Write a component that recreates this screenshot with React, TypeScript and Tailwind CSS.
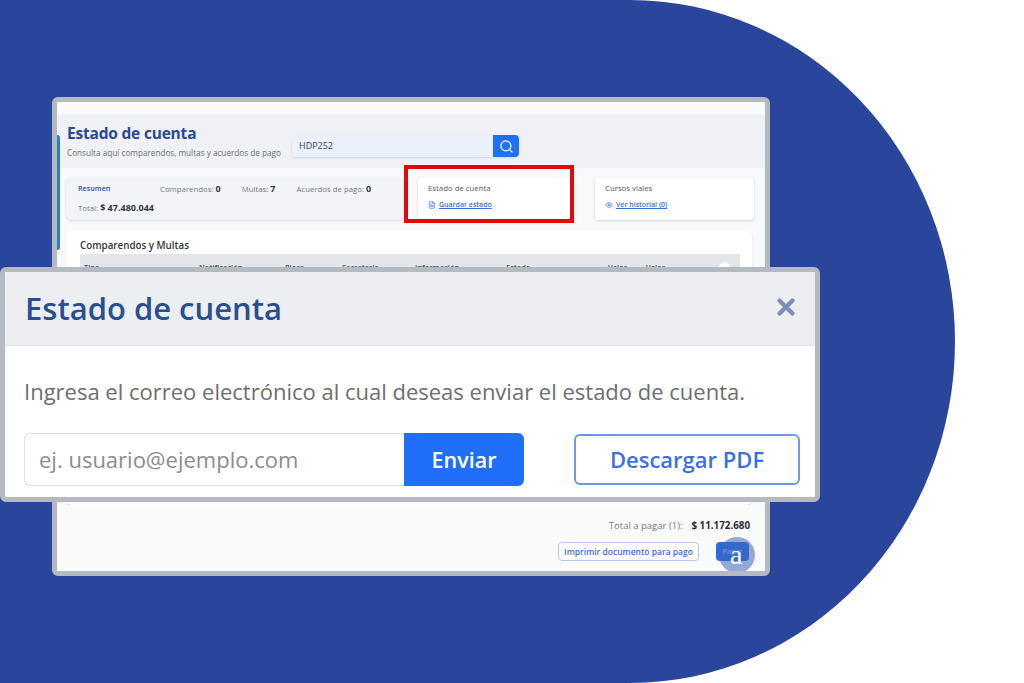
import { FileText, Eye, Search, X } from "lucide-react";

const font = { fontFamily: '"Open Sans", "Noto Sans", sans-serif' };

function Stat({ label, value }: { label: string; value: string }) {
  return (
    <span className="text-[#74787d] whitespace-nowrap">
      {label}: <b className="text-[#33373b] text-[9px]">{value}</b>
    </span>
  );
}

function LinkCard({ title, link, icon, cardClass }: { title: string; link: string; icon: React.ReactNode; cardClass: string }) {
  return (
    <div className={`h-[42px] bg-white rounded pl-[10px] pt-[5px] ${cardClass}`}>
      <div className="text-[7.8px] leading-[11px] text-[#55595e]">{title}</div>
      <div className="flex items-center gap-[3px] mt-[5px] text-[7px] leading-[11px] font-semibold text-[#3b6fd8] underline">
        {icon}
        {link}
      </div>
    </div>
  );
}

function Card() {
  return (
    <div className="relative w-[718px] h-[479px] ml-[52px] border-[5px] border-[#b5b9c0] rounded-md bg-[#f8f9fa] flex flex-col overflow-hidden">
      <div className="h-3 bg-[#fafafa] shrink-0" />
      <div className="h-[54px] bg-[#f0f1f4] pl-[10px] flex shrink-0">
        <div className="w-[225px] pt-[9px]">
          <div className="text-[15.5px] leading-[20px] font-bold tracking-[-0.2px] text-[#2b4a8e]">Estado de cuenta</div>
          <div className="text-[8.2px] leading-[12px] mt-[4px] text-[#6b6f75] whitespace-nowrap">
            Consulta aquí comparendos, multas y acuerdos de pago
          </div>
        </div>
        <div className="flex h-[22px] mt-[21px] shadow-sm rounded-sm">
          <div className="w-[201px] bg-[#eaf1fc] pl-[7px] text-[9px] leading-[22px] text-[#3c4350]">HDP252</div>
          <div className="w-[26px] bg-[#1f70f5] flex items-center justify-center rounded-r-sm">
            <Search className="w-[15px] h-[15px] text-white" strokeWidth={2} />
          </div>
        </div>
      </div>

      <div className="flex pl-[9px] pt-[10px] shrink-0">
        <div className="w-[338px] h-[42px] bg-[#f3f4f7] rounded-md shadow-[0_1px_3px_rgba(0,0,0,0.12)] pl-3 pt-[5px] text-[7.8px] leading-[11px]">
          <div className="flex">
            <span className="w-[82px] font-semibold text-[7.2px] text-[#2f5597]">Resumen</span>
            <div className="flex gap-[21px]">
              <Stat label="Comparendos" value="0" />
              <Stat label="Multas" value="7" />
              <Stat label="Acuerdos de pago" value="0" />
            </div>
          </div>
          <div className="mt-[7px] text-[#74787d]">
            Total: <b className="text-[#33373b] text-[9px]">$ 47.480.044</b>
          </div>
        </div>
        <LinkCard
          title="Estado de cuenta"
          link="Guardar estado"
          icon={<FileText className="w-[8px] h-[8px]" />}
          cardClass="ml-[14px] w-[157px] shadow-[0_1px_3px_rgba(0,0,0,0.12)]"
        />
        <LinkCard
          title="Cursos viales"
          link="Ver historial (0)"
          icon={<Eye className="w-[8px] h-[8px]" />}
          cardClass="ml-[20px] w-[159px] shadow-[0_1px_3px_rgba(0,0,0,0.15)]"
        />
      </div>

      <div className="ml-[9px] mr-[13px] mt-[10px] flex-1 bg-white rounded-md pl-[14px] pr-[12px] pt-[9px] flex flex-col shadow-[0_1px_2px_rgba(0,0,0,0.12)]">
        <div className="text-[9.8px] leading-[13px] font-semibold text-[#33373b]">Comparendos y Multas</div>
        <div className="h-[20px] mt-[2px] bg-[#e3e5e8] relative text-[7.5px] font-semibold text-[#555] flex pl-1 pt-[8px] leading-[11px] overflow-hidden">
          <span className="w-[115px]">Tipo</span>
          <span className="w-[86px]">Notificación</span>
          <span className="w-[57px]">Placa</span>
          <span className="w-[73px]">Secretaría</span>
          <span className="w-[91px]">Información</span>
          <span className="w-[102px]">Estado</span>
          <span className="w-[38px]">Valor</span>
          <span className="w-[73px]">Valor</span>
          <span className="w-[11px] h-[11px] rounded-full bg-white" />
        </div>
      </div>

      <div className="bg-[#fafafa] h-[66px] shrink-0 pr-[15px] flex flex-col items-end pt-[15px]">
        <div className="flex text-[9.5px] leading-[12px] text-[#777b80]">
          <span>Total a pagar (1):</span>
          <b className="ml-[9px] text-[9.8px] text-[#2b2f33]">$ 11.172.680</b>
        </div>
        <div className="flex mt-[10px] mr-[1px]">
          <div className="w-[141px] h-[19px] border border-[#b5c9ee] rounded-sm bg-white text-center text-[8.5px] leading-[17px] font-semibold text-[#3b6fd8]">
            Imprimir documento para pago
          </div>
          <div className="relative w-[33px] h-[19px] ml-[17px] bg-[#2d6be0] rounded-sm text-center text-[7.5px] leading-[19px] text-[#c9d8f5]">
            Pagar
            <span className="absolute left-[3px] top-[-5px] w-9 h-9 rounded-full bg-[#3e66b8]/55" />
            <span className="absolute left-[14px] top-[-1px] text-[28px] leading-[28px] text-white" style={{ fontFamily: '"Liberation Serif", serif' }}>
              a
            </span>
          </div>
        </div>
      </div>

      <div className="absolute left-0 top-[33px] w-[3px] h-[115px] bg-[#2a7fc0] rounded-r-sm" />
      <div className="absolute left-[347px] top-[63px] w-[170px] h-[58px] border-[4px] border-[#e00a0a]" />
    </div>
  );
}

function Modal() {
  return (
    <div className="absolute left-0 top-[267px] w-[820px] h-[235px] border-[5px] border-[#b5b9c0] rounded-md bg-white overflow-hidden">
      <div className="h-[74px] bg-[#eceef1] border-b border-[#e2e4e7] flex items-center justify-between pl-5 pr-4">
        <span className="text-[31px] leading-[40px] font-semibold text-[#2a4f8f] pb-[2px]">Estado de cuenta</span>
        <X className="w-[26px] h-[26px] mb-[3px] text-[#7f8fb5]" strokeWidth={4} />
      </div>
      <div className="pl-[19px] pt-[31px] pr-[15px]">
        <div className="text-[22px] leading-[28px] text-[#6e6e6e] whitespace-nowrap">
          Ingresa el correo electrónico al cual deseas enviar el estado de cuenta.
        </div>
        <div className="flex mt-[28px]">
          <div className="w-[380px] h-[53px] border border-[#dfe1e4] border-r-0 rounded-l-md pl-[14px] text-[22px] leading-[51px] text-[#8a8d91]">
            ej. usuario@ejemplo.com
          </div>
          <div className="w-[120px] h-[53px] bg-[#1f6ffb] rounded-r-md text-center text-[21.5px] leading-[53px] font-semibold text-white">
            Enviar
          </div>
          <div className="w-[226px] h-[51px] mt-px ml-[50px] border-2 border-[#6f96e6] rounded-md text-center text-[22px] leading-[47px] font-semibold text-[#3d6fe0]">
            Descargar PDF
          </div>
        </div>
      </div>
    </div>
  );
}

export default function App() {
  return (
    <div className="relative w-[1024px] h-[683px] bg-white overflow-hidden pt-[97px]" style={font}>
      <div className="absolute left-0 top-0 w-[955px] h-[683px] bg-[#2a459c] rounded-r-[325px_341.5px]" />
      <div className="relative">
        <Card />
      </div>
      <Modal />
    </div>
  );
}
